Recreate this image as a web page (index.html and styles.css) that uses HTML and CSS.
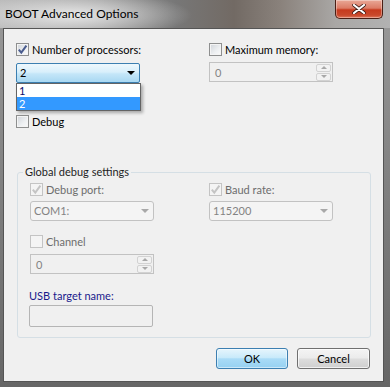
FILE: index.html
```html
<!DOCTYPE html>
<html>
<head>
<meta charset="utf-8">
<link rel="stylesheet" href="styles.css">
</head>
<body>
<div class="window">
  <div class="titlebar">
    <span class="title">BOOT Advanced Options</span>
    <div class="close">
      <svg width="14" height="10" viewBox="0 0 14 10"><path d="M2 1 L12 9 M12 1 L2 9" stroke="#3a1a14" stroke-width="3.6" stroke-linecap="round"/><path d="M2 1 L12 9 M12 1 L2 9" stroke="#ffffff" stroke-width="2.2" stroke-linecap="round"/></svg>
    </div>
  </div>
  <div class="client">
    <div class="top">
      <div class="col">
        <div class="chk"><span class="box"><svg width="11" height="11" viewBox="0 0 11 11"><path d="M1.8 5.6 L4.3 8.6 L9.4 1.6" fill="none" stroke="#4a5c8e" stroke-width="2"/></svg></span>Number of processors:</div>
        <div class="combo open">
          <span class="val">2</span><span class="arrow"></span>
          <ul class="droplist">
            <li>1</li>
            <li class="sel">2</li>
          </ul>
        </div>
        <div class="chk debug"><span class="box"></span>Debug</div>
      </div>
      <div class="col">
        <div class="chk"><span class="box"></span>Maximum memory:</div>
        <div class="spin dis"><span class="val">0</span><span class="spinbtns"><span class="sb up"></span><span class="sb down"></span></span></div>
      </div>
    </div>
    <fieldset class="group">
      <legend>Global debug settings</legend>
      <div class="ggrid">
        <div class="col">
          <div class="chk dis"><span class="box"><svg width="11" height="11" viewBox="0 0 11 11"><path d="M1.8 5.6 L4.3 8.6 L9.4 1.6" fill="none" stroke="#c4c4c4" stroke-width="2"/></svg></span>Debug port:</div>
          <div class="combo dis"><span class="val">COM1:</span><span class="arrow"></span></div>
          <div class="chk dis channel"><span class="box"></span>Channel</div>
          <div class="spin dis sp2"><span class="val">0</span><span class="spinbtns"><span class="sb up"></span><span class="sb down"></span></span></div>
        </div>
        <div class="col">
          <div class="chk dis"><span class="box"><svg width="11" height="11" viewBox="0 0 11 11"><path d="M1.8 5.6 L4.3 8.6 L9.4 1.6" fill="none" stroke="#c4c4c4" stroke-width="2"/></svg></span>Baud rate:</div>
          <div class="combo dis"><span class="val">115200</span><span class="arrow"></span></div>
        </div>
      </div>
      <div class="usblabel">USB target name:</div>
      <div class="textbox"></div>
    </fieldset>
    <div class="buttons">
      <div class="btn def">OK</div>
      <div class="btn">Cancel</div>
    </div>
  </div>
</div>
</body>
</html>
```
FILE: styles.css
```css
* { box-sizing: border-box; }
html, body { margin: 0; padding: 0; }
body {
  width: 390px;
  height: 387px;
  overflow: hidden;
  font-family: Lato, "Noto Sans", sans-serif;
  font-size: 11px;
  color: #000;
}
.window {
  width: 390px;
  height: 387px;
  background: linear-gradient(to bottom, #9a9a9a, #7a7a7a 60%, #666 100%);
  display: flex;
  flex-direction: column;
}
.titlebar {
  height: 28px;
  display: flex;
  align-items: flex-start;
  justify-content: space-between;
  background:
    radial-gradient(ellipse 120px 24px at 72px 15px, rgba(236,236,236,0.95), rgba(236,236,236,0)),
    linear-gradient(to right, #b4b4b4 0%, #9a9a9a 25%, #777 45%, #726a64 60%, #8a827c 72%, #a9a7a5 86%, #b2b2b2 100%);
}
.title {
  margin: 6px 0 0 5px;
  line-height: 16px;
  font-size: 12px;
  color: #000;
}
.close {
  width: 48px;
  height: 19px;
  margin-right: 7px;
  border: 1px solid #4a1f15;
  border-top: none;
  border-radius: 0 0 5px 5px;
  background: linear-gradient(to bottom, #e9a897 0%, #dc7c66 45%, #c63a1e 55%, #c9492c 85%, #e07a5e 100%);
  box-shadow: inset 0 0 0 1px rgba(255,255,255,0.35);
  display: flex;
  align-items: center;
  justify-content: center;
}
.client {
  margin: 0 6px 0 3px;
  height: 354px;
  border: 1px solid #555;
  background: #f0f0f0;
  padding: 13px 12px 0 12px;
  display: flex;
  flex-direction: column;
}
.top {
  display: grid;
  grid-template-columns: 193px 1fr;
}
.col { display: flex; flex-direction: column; align-items: flex-start; }
.chk {
  height: 15px;
  line-height: 15px;
  display: flex;
  align-items: center;
  white-space: nowrap;
}
.box {
  width: 13px;
  height: 13px;
  margin-right: 3px;
  border: 1px solid #8e8f8f;
  background: linear-gradient(135deg, #d0d4d9 0%, #eef0f2 60%, #fafafa 100%);
  box-shadow: inset 0 0 0 1px #f4f4f4;
  display: flex;
  align-items: center;
  justify-content: center;
  flex: none;
}
.chk.dis { color: #6d6d6d; }
.chk.dis .box {
  border-color: #c4c4c4;
  background: #f4f4f4;
  box-shadow: none;
}
.combo {
  position: relative;
  width: 124px;
  height: 20px;
  margin-top: 6px;
  border: 1px solid #adb2b5;
  border-radius: 2px;
  display: flex;
  align-items: center;
  padding-left: 3px;
}
.combo .val { flex: 1; line-height: 16px; }
.combo .arrow {
  width: 0;
  height: 0;
  border-left: 4px solid transparent;
  border-right: 4px solid transparent;
  border-top: 4px solid #000;
  margin-right: 4px;
}
.combo.open {
  border-color: #3c7fb1;
  background: linear-gradient(to bottom, #eef8fd 0%, #d8effb 45%, #c4e6f8 55%, #a9d8f2 100%);
}
.combo.dis {
  margin-top: 4px;
  border-color: #c2c2c2;
  border-radius: 3px;
  background: #f4f4f4;
  color: #838383;
}
.combo.dis .arrow { border-top-color: #a8a8a8; }
.droplist {
  position: absolute;
  top: 19px;
  left: -1px;
  width: 125px;
  margin: 0;
  padding: 0;
  list-style: none;
  border: 1px solid #646464;
  background: #fff;
  box-shadow: 2px 2px 3px rgba(0,0,0,0.3);
  z-index: 5;
}
.droplist li {
  height: 13px;
  line-height: 13px;
  padding-left: 2px;
  color: #0c0c6a;
  overflow: hidden;
}
.droplist li.sel { background: #3399ff; color: #fff; }
.debug { margin-top: 31px; }
.spin {
  width: 124px;
  height: 20px;
  margin-top: 5px;
  border: 1px solid #c2c2c2;
  background: #f0f0f0;
  display: flex;
  align-items: center;
  padding-left: 5px;
  color: #838383;
}
.spin .val { flex: 1; }
.spinbtns {
  display: flex;
  flex-direction: column;
  gap: 1px;
  margin-right: 1px;
}
.sb {
  width: 15px;
  height: 8px;
  border: 1px solid #d2d2d2;
  background: #f2f2f2;
  border-radius: 2px;
  display: flex;
  align-items: center;
  justify-content: center;
}
.sb::after {
  content: "";
  width: 0;
  height: 0;
  border-left: 3px solid transparent;
  border-right: 3px solid transparent;
}
.sb.up::after { border-bottom: 3px solid #a8a8a8; }
.sb.down::after { border-top: 3px solid #a8a8a8; }
.group {
  margin: 35px 0 0 1px;
  padding: 2px 12px 10px 12px;
  border: 1px solid #d5dfe5;
  border-radius: 3px;
  min-width: 0;
}
.group legend {
  margin-left: -7px;
  padding: 0 2px;
  line-height: 16px;
  color: #1e1e1e;
}
.ggrid {
  display: grid;
  grid-template-columns: 179px 1fr;
}
.channel { margin-top: 13px; }
.sp2 { margin-top: 5px; }
.usblabel {
  margin-top: 14px;
  line-height: 15px;
  color: #1a1a8c;
  margin-left: -1px;
}
.textbox {
  width: 124px;
  height: 22px;
  margin-top: 2px;
  margin-left: -1px;
  border: 1px solid #b5b5b5;
  border-radius: 2px;
  background: #f0f0f0;
}
.buttons {
  margin-top: 10px;
  display: flex;
  justify-content: flex-end;
  gap: 9px;
  padding-right: 1px;
}
.btn {
  width: 73px;
  height: 21px;
  border: 1px solid #707070;
  border-radius: 3px;
  background: linear-gradient(to bottom, #f4f4f4 0%, #ebebeb 48%, #dddddd 52%, #cfcfcf 100%);
  box-shadow: inset 0 0 0 1px rgba(255,255,255,0.7);
  display: flex;
  align-items: center;
  justify-content: center;
  line-height: 15px;
}
.btn.def {
  width: 72px;
  border-color: #3c7fb1;
  background: linear-gradient(to bottom, #e6f5fc 0%, #c9eafa 45%, #a9dbf6 52%, #96d1f2 100%);
  box-shadow: inset 0 0 0 1px rgba(255,255,255,0.5);
}
```
